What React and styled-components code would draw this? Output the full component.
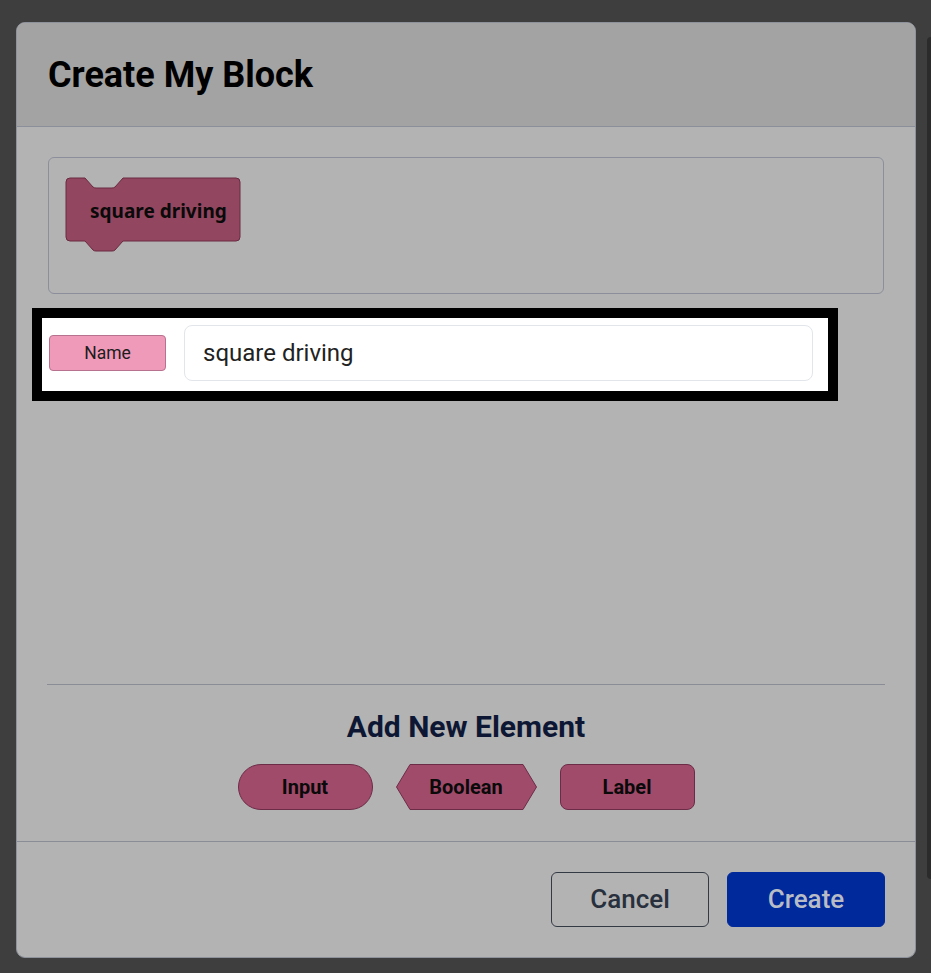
import React from "react";
import styled, { createGlobalStyle } from "styled-components";

const GlobalStyle = createGlobalStyle`
  html, body {
    margin: 0;
    padding: 0;
    background: #3e3e3e;
    font-family: Roboto, "Liberation Sans", sans-serif;
  }
  * {
    box-sizing: border-box;
  }
`;

const Page = styled.div`
  display: flex;
  align-items: flex-start;
  height: 973px;
  padding: 22px 0 0 16px;
  overflow: hidden;
`;

const Modal = styled.div`
  width: 900px;
  height: 936px;
  flex-shrink: 0;
  display: flex;
  flex-direction: column;
  background: #b3b3b3;
  border: 1px solid #8e929b;
  border-radius: 9px;
  overflow: hidden;
`;

const SidePanel = styled.div`
  flex: 1;
  height: 842px;
  margin: 15px 0 0 11px;
  background: #2b2b2b;
  border-radius: 8px 0 0 8px;
`;

const Header = styled.div`
  height: 104px;
  display: flex;
  align-items: center;
  padding: 0 31px;
  background: #a3a3a3;
  border-bottom: 1px solid #8b8f99;
`;

const Title = styled.h2`
  margin: 0;
  font: 700 36px Roboto, sans-serif;
  color: #000;
`;

const Body = styled.div`
  flex: 1;
  display: flex;
  flex-direction: column;
  padding: 30px 31px 31px;
`;

const Preview = styled.div`
  height: 137px;
  padding: 19px 16px;
  border: 1.5px solid #8c8f9b;
  border-radius: 6px;
`;

const Block = styled.div`
  position: relative;
  display: inline-flex;
  align-items: center;
  width: 176px;
  height: 65px;
  padding: 2px 0 0 25px;
  font: 700 19px "Noto Sans", "Open Sans", sans-serif;
  color: #0a0a0a;

  svg {
    position: absolute;
    left: 0;
    top: 0;
    z-index: 0;
  }

  span {
    position: relative;
    z-index: 1;
  }
`;

const Spotlight = styled.div`
  display: flex;
  align-items: center;
  gap: 18px;
  width: 806px;
  height: 93px;
  margin: 14px 0 0 -16px;
  padding: 0 15px 3px 7px;
  background: #fff;
  border: 10px solid #000;
`;

const NameTag = styled.div`
  width: 117px;
  height: 36px;
  display: flex;
  align-items: center;
  justify-content: center;
  background: #f09aba;
  border: 1px solid #b7728f;
  border-radius: 4px;
  font: 400 17.5px Roboto, sans-serif;
  color: #1c1c1c;
`;

const NameInput = styled.input`
  flex: 1;
  height: 56px;
  padding: 0 18px;
  border: 1px solid #e2e5ea;
  border-radius: 8px;
  font: 400 24px Roboto, sans-serif;
  color: #222;
  outline: none;
`;

const Spacer = styled.div`
  flex: 1;
`;

const Divider = styled.div`
  height: 1px;
  margin: 0 -1px;
  background: #8a8d96;
`;

const SectionTitle = styled.h3`
  margin: 24px 0 0;
  line-height: 32px;
  text-align: center;
  font: 700 30px Roboto, sans-serif;
  color: #0d1734;
`;

const ElementRow = styled.div`
  display: flex;
  justify-content: center;
  gap: 23px;
  margin-top: 20px;
`;

const ElementButton = styled.button`
  position: relative;
  width: ${(p) => (p.$shape === "hex" ? 141 : 135)}px;
  height: 46px;
  padding: 0;
  background: ${(p) => (p.$shape === "hex" ? "transparent" : "#a14b6b")};
  border: ${(p) => (p.$shape === "hex" ? "none" : "1px solid #6c2b46")};
  border-radius: ${(p) => (p.$shape === "pill" ? "23px" : "8px")};
  font: 700 20px Roboto, sans-serif;
  color: #0a0a0a;
  cursor: pointer;

  svg {
    position: absolute;
    inset: 0;
  }

  span {
    position: relative;
  }
`;

const Footer = styled.div`
  display: flex;
  justify-content: flex-end;
  gap: 18px;
  padding: 30px 30px;
  border-top: 1px solid #8a8d96;
`;

const ActionButton = styled.button`
  width: 158px;
  height: 55px;
  padding: 0 0 2px;
  border-radius: 6px;
  font: 500 26px Roboto, sans-serif;
  cursor: pointer;
  background: ${(p) => (p.$primary ? "#00299b" : "transparent")};
  color: ${(p) => (p.$primary ? "#b8bcc6" : "#27303c")};
  border: 1px solid ${(p) => (p.$primary ? "#00299b" : "#333a44")};
`;

const BlockShape = () => (
  <svg width="176" height="76" viewBox="0 0 176 76">
    <path
      d="M1 5 Q1 1 5 1 L20 1 L28 10 Q29 11 31 11 L47 11 Q49 11 50 10 L58 1 L171 1 Q175 1 175 5 L175 60 Q175 64 171 64 L58 64 L50 73 Q49 74 47 74 L31 74 Q29 74 28 73 L20 64 L5 64 Q1 64 1 60 Z"
      fill="#93465f"
      stroke="#6a2a42"
      strokeWidth="1"
    />
  </svg>
);

const HexShape = () => (
  <svg width="141" height="46" viewBox="0 0 141 46">
    <polygon
      points="0.5,23 14,0.5 127,0.5 140.5,23 127,45.5 14,45.5"
      fill="#a14b6b"
      stroke="#6c2b46"
      strokeWidth="1"
    />
  </svg>
);

export default function App() {
  return (
    <>
      <GlobalStyle />
      <Page>
        <Modal>
          <Header>
            <Title>Create My Block</Title>
          </Header>
          <Body>
            <Preview>
              <Block>
                <BlockShape />
                <span>square driving</span>
              </Block>
            </Preview>
            <Spotlight>
              <NameTag>Name</NameTag>
              <NameInput defaultValue="square driving" />
            </Spotlight>
            <Spacer />
            <Divider />
            <SectionTitle>Add New Element</SectionTitle>
            <ElementRow>
              <ElementButton $shape="pill">
                <span>Input</span>
              </ElementButton>
              <ElementButton $shape="hex">
                <HexShape />
                <span>Boolean</span>
              </ElementButton>
              <ElementButton $shape="rect">
                <span>Label</span>
              </ElementButton>
            </ElementRow>
          </Body>
          <Footer>
            <ActionButton>Cancel</ActionButton>
            <ActionButton $primary>Create</ActionButton>
          </Footer>
        </Modal>
        <SidePanel />
      </Page>
    </>
  );
}
